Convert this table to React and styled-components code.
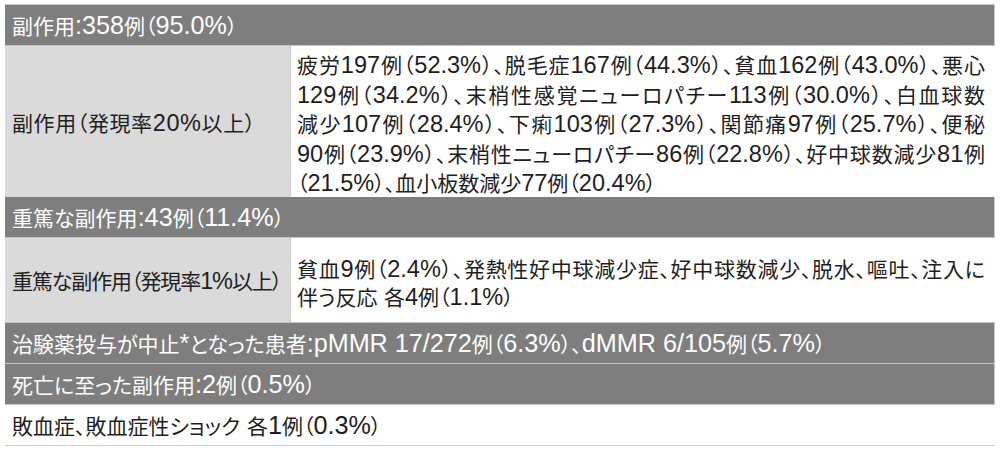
import React from 'react';
import styled, { createGlobalStyle } from 'styled-components';

const Global = createGlobalStyle`
  html, body { margin: 0; padding: 0; background: #ffffff; }
  body {
    font-family: "Noto Sans CJK JP", sans-serif;
    font-size: 21px;
    color: #1e1e1e;
  }
`;

const Page = styled.div`
  padding: 4px 5px 0 5px;
  width: 990px;
`;

const Table = styled.div`
  display: flex;
  flex-direction: column;
  border-top: 1px solid #cdcdcd;
  font-feature-settings: "palt";
`;

const Latin = styled.span`
  font-family: "Liberation Sans", "Noto Sans CJK JP", sans-serif;
  font-size: 1.12em;
  line-height: 1;
`;

const Text = styled.span`
  white-space: pre;
`;

const Header = styled.div`
  height: 40px;
  display: flex;
  align-items: center;
  padding-left: 7px;
  background: #7e7e7e;
  color: #ffffff;
  border-bottom: 1px solid #c4c4c4;
  border-right: 1px solid #c8c8c8;
  white-space: nowrap;

  ${Latin} {
    font-size: 1.2em;
  }
`;

const Plain = styled.div`
  height: 40px;
  display: flex;
  align-items: center;
  padding-left: 7px;
  background: #ffffff;
  border-bottom: 1px solid #cdcdcd;
  white-space: nowrap;

  ${Latin} {
    font-size: 1.2em;
  }
`;

const Split = styled.div`
  display: grid;
  grid-template-columns: 286px 1fr;
  height: ${(p) => p.$h}px;
  border-bottom: 1px solid #c4c4c4;
`;

const Label = styled.div`
  display: flex;
  align-items: center;
  padding-left: 7px;
  background: #dadada;
  border-right: 1px solid #cfcfcf;
  white-space: nowrap;
  letter-spacing: ${(p) => p.$ls || 0}px;
`;

const Content = styled.div`
  display: flex;
  flex-direction: column;
  justify-content: center;
  padding: ${(p) => p.$pt}px 10px 0 6px;
  background: #ffffff;
  line-height: ${(p) => p.$lh}px;
  min-width: 0;
`;

const Line = styled.div`
  white-space: nowrap;
  text-align: justify;
  text-align-last: ${(p) => (p.$last ? 'left' : 'justify')};
`;

const T = ({ children }) => {
  const parts = String(children).split(/([0-9A-Za-z.%/*: ]+)/);
  return (
    <Text>
      {parts.map((s, i) =>
        i % 2 === 1 ? <Latin key={i}>{s}</Latin> : <React.Fragment key={i}>{s}</React.Fragment>
      )}
    </Text>
  );
};

const body1 = [
  '疲労197例（52.3%）、脱毛症167例（44.3%）、貧血162例（43.0%）、悪心',
  '129例（34.2%）、末梢性感覚ニューロパチー113例（30.0%）、白血球数',
  '減少107例（28.4%）、下痢103例（27.3%）、関節痛97例（25.7%）、便秘',
  '90例（23.9%）、末梢性ニューロパチー86例（22.8%）、好中球数減少81例',
  '（21.5%）、血小板数減少77例（20.4%）',
];

const body2 = [
  '貧血9例（2.4%）、発熱性好中球減少症、好中球数減少、脱水、嘔吐、注入に',
  '伴う反応 各4例（1.1%）',
];

const Lines = ({ lines }) =>
  lines.map((l, i) => (
    <Line key={i} $last={i === lines.length - 1}>
      <T>{l}</T>
    </Line>
  ));

export default function App() {
  return (
    <Page>
      <Global />
      <Table>
        <Header>
          <T>副作用:358例（95.0%）</T>
        </Header>
        <Split $h={150}>
          <Label $ls={0.6}>
            <T>副作用（発現率20%以上）</T>
          </Label>
          <Content $lh={29.5} $pt={4}>
            <Lines lines={body1} />
          </Content>
        </Split>
        <Header>
          <T>重篤な副作用:43例（11.4%）</T>
        </Header>
        <Split $h={84}>
          <Label $ls={-1.1}>
            <T>重篤な副作用（発現率1%以上）</T>
          </Label>
          <Content $lh={28} $pt={4}>
            <Lines lines={body2} />
          </Content>
        </Split>
        <Header>
          <T>治験薬投与が中止*となった患者:pMMR 17/272例（6.3%）、dMMR 6/105例（5.7%）</T>
        </Header>
        <Header>
          <T>死亡に至った副作用:2例（0.5%）</T>
        </Header>
        <Plain>
          <T>敗血症、敗血症性ショック 各1例（0.3%）</T>
        </Plain>
      </Table>
    </Page>
  );
}
